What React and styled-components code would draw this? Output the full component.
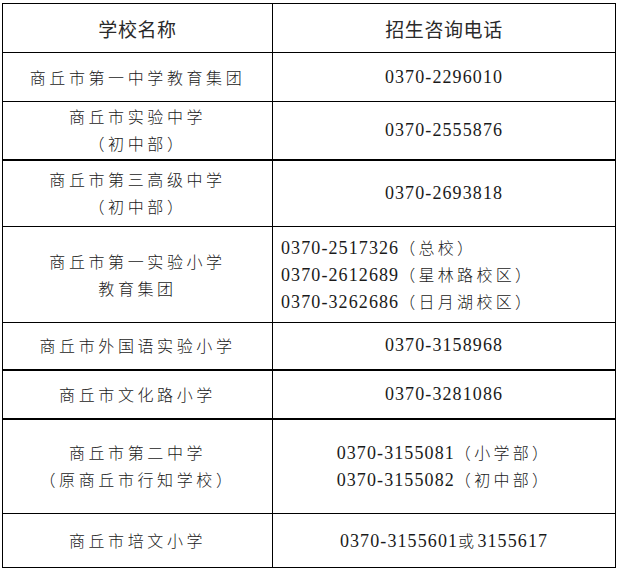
import styled, { createGlobalStyle } from "styled-components";

const GlobalStyle = createGlobalStyle`
    html, body {
        margin: 0;
        padding: 0;
        background: #ffffff;
    }
`;

const Page = styled.div`
    padding: 3px 0 0 2px;
    width: 619px;
    height: 572px;
    box-sizing: border-box;
    background: #ffffff;
`;

const Table = styled.table`
    width: 614px;
    border-collapse: collapse;
    table-layout: fixed;
    color: #1a1a1a;
    font-family: "Liberation Serif", "Noto Sans CJK SC", serif;
    font-size: 16px;
`;

const Row = styled.tr`
    height: ${({ $h }) => $h}px;
    border-top: ${({ $thick }) => ($thick ? "2px" : "1px")} solid #000;
`;

const Head = styled.th`
    border: 1px solid #000;
    font-family: "Noto Sans CJK SC", "Liberation Sans", sans-serif;
    font-weight: normal;
    font-size: 19px;
    letter-spacing: 0.6px;
    color: #2a2a2a;
    text-align: center;
    vertical-align: middle;
    padding: 0;
`;

const Name = styled.td`
    border: 1px solid #000;
    text-align: center;
    vertical-align: middle;
    padding: 0;
    letter-spacing: 3.6px;
    font-family: "Noto Sans CJK SC", sans-serif;
    font-weight: 300;
`;

const Phone = styled.td`
    border: 1px solid #000;
    text-align: ${({ $left }) => ($left ? "left" : "center")};
    padding: ${({ $left }) => ($left ? "0 0 0 8px" : "0")};
    vertical-align: middle;
    font-size: 18px;
    letter-spacing: 1.1px;
`;

const Cjk = styled.span`
    font-family: "Noto Sans CJK SC", sans-serif;
    font-weight: 300;
    font-size: 16px;
    letter-spacing: 3.3px;
`;

const Line = styled.div`
    height: 27px;
    line-height: 27px;
    white-space: nowrap;
`;

const rows = [
    { h: 49, name: ["商丘市第一中学教育集团"], phones: ["0370-2296010"] },
    { h: 58, name: ["商丘市实验中学", "（初中部）"], phones: ["0370-2555876"] },
    { h: 67, name: ["商丘市第三高级中学", "（初中部）"], phones: ["0370-2693818"], thick: true },
    {
        h: 96,
        name: ["商丘市第一实验小学", "教育集团"],
        phones: [
            ["0370-2517326", "（总校）"],
            ["0370-2612689", "（星林路校区）"],
            ["0370-3262686", "（日月湖校区）"],
        ],
        left: true,
    },
    { h: 47, name: ["商丘市外国语实验小学"], phones: ["0370-3158968"] },
    { h: 49, name: ["商丘市文化路小学"], phones: ["0370-3281086"], thick: true },
    {
        h: 95,
        name: ["商丘市第二中学", "（原商丘市行知学校）"],
        phones: [
            ["0370-3155081", "（小学部）"],
            ["0370-3155082", "（初中部）"],
        ],
        thick: true,
    },
    { h: 54, name: ["商丘市培文小学"], phones: [["0370-3155601", "或", "3155617"]] },
];

const PhoneText = ({ value }) => {
    if (typeof value === "string") return value;
    return value.map((part, i) =>
        /[\u4e00-\u9fff\uff08\uff09]/.test(part) ? <Cjk key={i}>{part}</Cjk> : <span key={i}>{part}</span>
    );
};

export default function App() {
    return (
        <Page>
            <GlobalStyle />
            <Table>
                <colgroup>
                    <col style={{ width: 270 }} />
                    <col />
                </colgroup>
                <tbody>
                    <Row $h={49}>
                        <Head>学校名称</Head>
                        <Head>招生咨询电话</Head>
                    </Row>
                    {rows.map((r, i) => (
                        <Row key={i} $h={r.h} $thick={r.thick}>
                            <Name>
                                {r.name.map((n) => (
                                    <Line key={n}>{n}</Line>
                                ))}
                            </Name>
                            <Phone $left={r.left}>
                                {r.phones.map((p, j) => (
                                    <Line key={j}>
                                        <PhoneText value={p} />
                                    </Line>
                                ))}
                            </Phone>
                        </Row>
                    ))}
                </tbody>
            </Table>
        </Page>
    );
}
